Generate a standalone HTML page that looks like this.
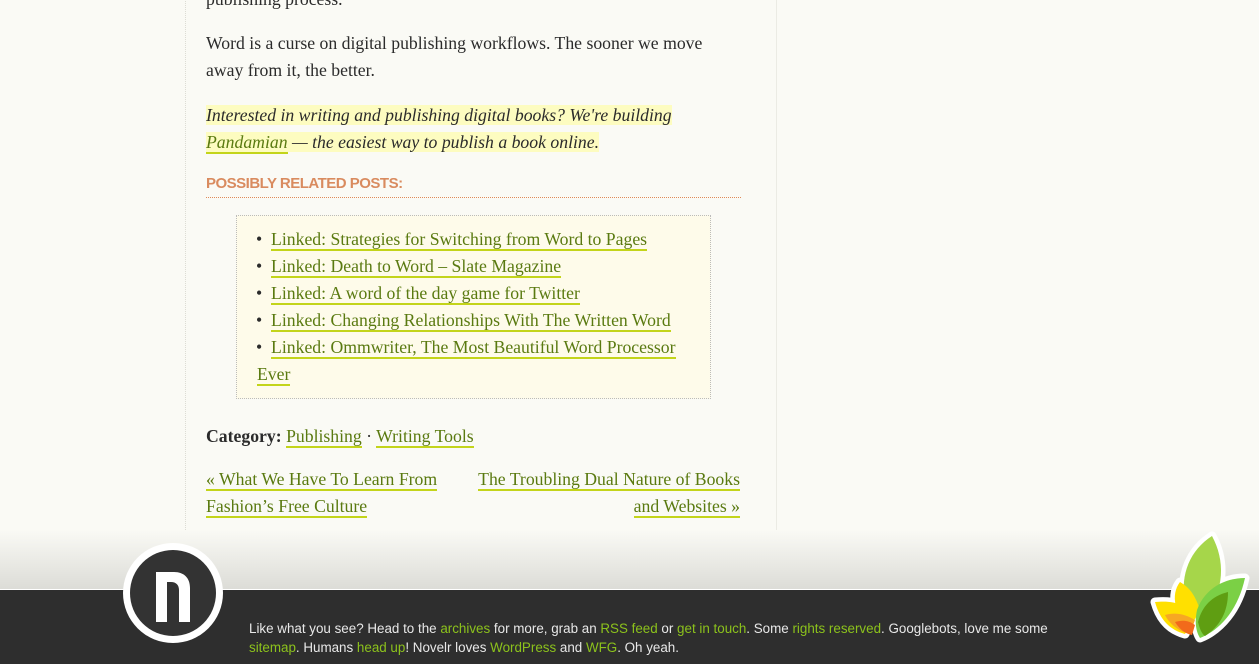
<!DOCTYPE html>
<html><head><meta charset="utf-8"><style>
*{margin:0;padding:0}
html,body{width:1259px;height:664px;overflow:hidden;background:#fafaf5}
body{position:relative;font-family:"Liberation Serif",serif;color:#2b2b2b}
.col{position:absolute;left:185px;top:-10px;width:590px;height:540px;border-left:1px dotted #dcdcd4;border-right:1px solid #ebebe4}
.t{position:absolute;left:206px;font-size:17.7px;line-height:27px;white-space:nowrap}
a{color:#5a7a10;text-decoration:none;border-bottom:2px solid #c3d41a}
.hl{background:#fdfcc0;font-style:italic}
.h{position:absolute;left:206px;top:175px;width:535px;height:22px;border-bottom:1px dotted #e08a58;color:#d98b5f;font:bold 15px "Liberation Sans",sans-serif;letter-spacing:-0.5px}
.box{position:absolute;left:236px;top:215px;width:473px;height:182px;border:1px dotted #bbb;background:#fefbea}
.foot{position:absolute;left:0;top:530px;width:1259px;height:59px;background:linear-gradient(#fafaf5,#dcdcd7)}
.dark{position:absolute;left:0;top:589px;width:1259px;height:75px;background:#2e2e2e;border-top:1px solid #fff}
.ft{position:absolute;left:249px;top:619px;font:13.4px/19px "Liberation Sans",sans-serif;color:#e8e8e8;white-space:nowrap}
.ft span{color:#8cc21c}
</style></head><body>
<div class="col"></div>
<div class="t" style="top:-14px">publishing process.</div>
<div class="t" style="top:30px">Word is a curse on digital publishing workflows. The sooner we move<br>away from it, the better.</div>
<div class="t" style="top:102px"><span class="hl">Interested in writing and publishing digital books? We're building</span><br><span class="hl"><a href="#">Pandamian</a> — the easiest way to publish a book online.</span></div>
<div class="h">POSSIBLY RELATED POSTS:</div>
<div class="box"></div>
<div class="t" style="top:226px;left:256px">
<div>•&nbsp; <a href="#">Linked: Strategies for Switching from Word to Pages</a></div>
<div>•&nbsp; <a href="#">Linked: Death to Word – Slate Magazine</a></div>
<div>•&nbsp; <a href="#">Linked: A word of the day game for Twitter</a></div>
<div>•&nbsp; <a href="#">Linked: Changing Relationships With The Written Word</a></div>
<div>•&nbsp; <a href="#">Linked: Ommwriter, The Most Beautiful Word Processor</a></div>
<div style="padding-left:1px"><a href="#">Ever</a></div>
</div>
<div class="t" style="top:423px"><b>Category:</b> <a href="#">Publishing</a> · <a href="#">Writing Tools</a></div>
<div class="t" style="top:466px"><a href="#">« What We Have To Learn From</a><br><a href="#">Fashion’s Free Culture</a></div>
<div class="t" style="top:466px;left:auto;right:519px;text-align:right"><a href="#">The Troubling Dual Nature of Books</a><br><a href="#">and Websites »</a></div>
<div class="foot"></div>
<div class="dark"></div>
<svg style="position:absolute;left:122px;top:542px" width="102" height="102"><circle cx="51" cy="51" r="50" fill="#fff"/><circle cx="51" cy="51" r="43" fill="#333"/><path d="M34 80V30h18c10 0 16 6 16 16v34h-11V48c0-5-3-8-8-8h-4v40z" fill="#fff"/></svg>
<svg style="position:absolute;left:1150px;top:530px" width="109" height="115" viewBox="0 0 109 115">
<g stroke="#fff" stroke-width="9" stroke-linejoin="round" fill="#fff">
<path d="M62 6C40 20 30 45 35 70L55 85C75 60 75 30 62 6z"/><path d="M95 48C75 48 55 58 47 80 45 90 45 100 50 108 70 100 88 80 95 48z"/><path d="M5 72C10 90 20 100 35 104L45 85C35 75 25 70 5 72z"/><path d="M30 52C20 65 25 85 40 98L50 80C45 65 40 58 30 52z"/>
</g>
<path d="M62 6C40 20 30 45 35 70L55 85C75 60 75 30 62 6z" fill="#a6d64a"/>
<path d="M5 72C10 90 20 100 35 104L45 85C35 75 25 70 5 72z" fill="#ffe000"/>
<path d="M30 52C20 65 25 85 40 98L50 80C45 65 40 58 30 52z" fill="#ffe000"/>
<path d="M15 85C20 95 30 102 40 104L45 90C35 84 25 82 15 85z" fill="#f7a823"/>
<path d="M25 92C30 100 36 104 42 105L45 95C38 90 32 90 25 92z" fill="#f26a1b"/>
<path d="M95 48C75 48 55 58 47 80 45 90 45 100 50 108 70 100 88 80 95 48z" fill="#7bd045"/>
<path d="M78 62C62 66 52 76 48 92 50 100 52 104 55 106 70 96 78 82 78 62z" fill="#5f9e12"/>
</svg>
<div class="ft">Like what you see? Head to the <span>archives</span> for more, grab an <span>RSS feed</span> or <span>get in touch</span>. Some <span>rights reserved</span>. Googlebots, love me some<br><span>sitemap</span>. Humans <span>head up</span>! Novelr loves <span>WordPress</span> and <span>WFG</span>. Oh yeah.</div>
</body></html>
